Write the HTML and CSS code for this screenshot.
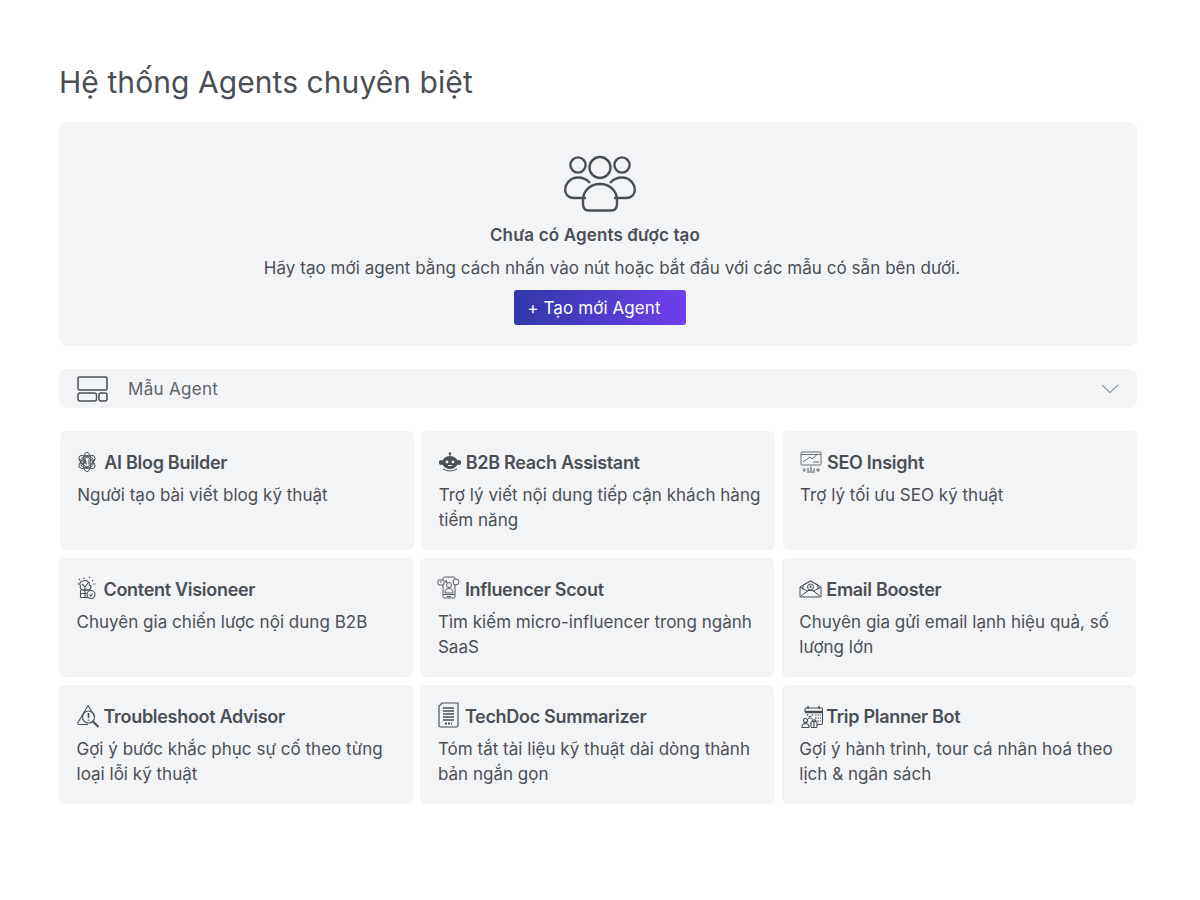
FILE: index.html
```html
<!DOCTYPE html>
<html lang="vi">
<head>
<meta charset="utf-8">
<title>Agents</title>
<link rel="stylesheet" href="styles.css">
</head>
<body>
<main class="page">
  <h1 class="title">Hệ thống Agents chuyên biệt</h1>
  <section class="hero">
    <svg class="hero-icon" width="72" height="57" viewBox="0 0 72 57" fill="none" stroke="#4b4f55" stroke-width="2.400">
      <circle cx="14" cy="10" r="7.600"/><circle cx="36" cy="12.500" r="10.500"/><circle cx="58" cy="10" r="7.600"/>
      <path d="M22 43H10C4 43 1.200 39 1.200 35C1.200 28 7 22.500 14 22.500C19 22.500 23 24.500 26 28"/>
      <path d="M50 43H62C68 43 70.800 39 70.800 35C70.800 28 65 22.500 58 22.500C53 22.500 49 24.500 46 28"/>
      <path d="M36 29C26 29 19 36 19 45V49C19 53 21 55.500 25 55.500H47C51 55.500 53 53 53 49V45C53 36 46 29 36 29Z"/>
    </svg>
    <h2 class="hero-title">Chưa có Agents được tạo</h2>
    <p class="hero-text">Hãy tạo mới agent bằng cách nhấn vào nút hoặc bắt đầu với các mẫu có sẵn bên dưới.</p>
    <button class="btn">+ Tạo mới Agent</button>
  </section>
  <div class="accordion">
    <svg class="acc-icon" width="31" height="26" viewBox="0 0 31 26" fill="none" stroke="#4b4f55" stroke-width="1.500">
      <rect x="1" y="1" width="29" height="13" rx="1.500"/><rect x="1" y="17" width="18.500" height="8" rx="2"/><rect x="22" y="17" width="8" height="8" rx="2"/>
    </svg>
    <span class="acc-label">Mẫu Agent</span>
    <svg class="chev" width="18" height="10" viewBox="0 0 18 10" fill="none" stroke="#9ca3af" stroke-width="1.300"><path d="M1 1L9 8.500L17 1"/></svg>
  </div>
  <div class="rows">
    <div class="row row-first">
      <article class="card">
        <h3 class="card-title">
          <span class="ic-box">
          <svg width="20" height="22" viewBox="0 0 20 22" fill="none" stroke="#4b4f55" stroke-width="1">
            <circle cx="10" cy="11" r="6.500"/><ellipse cx="10" cy="11" rx="9.300" ry="4.500" transform="rotate(35 10 11)"/><ellipse cx="10" cy="11" rx="9.300" ry="4.500" transform="rotate(-35 10 11)"/><ellipse cx="10" cy="11" rx="3.800" ry="9.800"/>
            <path d="M6.500 13.500L8 8.500L9.500 13.500M7 12H9M12 8.500V13.500" stroke-width="1.100"/>
          </svg></span>AI Blog Builder</h3>
        <p class="card-text">Người tạo bài viết blog kỹ thuật</p>
      </article>
      <article class="card">
        <h3 class="card-title">
          <span class="ic-box">
          <svg width="22" height="20" viewBox="0 0 22 20">
            <circle cx="11" cy="1.500" r="1.300" fill="#4b4f55"/><path d="M11 2V4M4 17Q11 21 18 17" stroke="#4b4f55" fill="none"/>
            <rect x="0" y="8" width="4" height="5" rx="2" fill="#4b4f55"/><rect x="18" y="8" width="4" height="5" rx="2" fill="#4b4f55"/>
            <ellipse cx="11" cy="10.500" rx="8" ry="6.500" fill="#4b4f55"/><circle cx="8" cy="10" r="1.400" fill="#f3f4f6"/><circle cx="14" cy="10" r="1.400" fill="#f3f4f6"/><path d="M9 13.500H13" stroke="#f3f4f6"/>
          </svg></span>B2B Reach Assistant</h3>
        <p class="card-text">Trợ lý viết nội dung tiếp cận khách hàng tiềm năng</p>
      </article>
      <article class="card">
        <h3 class="card-title">
          <span class="ic-box">
          <svg width="22" height="22" viewBox="0 0 22 22" fill="none" stroke="#6b7075" stroke-width="1">
            <rect x="1" y="1" width="20" height="13" rx="1"/><path d="M1 3.500H21M3 11L10 6L12 8L17 3.500M13 11H19M3 19H6M16 19H20M4 17V21M18 17V21"/><path d="M8 20V17M11 20V15.500M14 20V17.500M7 21H15" stroke="#4b4f55"/>
          </svg></span>SEO Insight</h3>
        <p class="card-text">Trợ lý tối ưu SEO kỹ thuật</p>
      </article>
    </div>
    <div class="row">
      <article class="card">
        <h3 class="card-title">
          <span class="ic-box ic-up">
          <svg width="20" height="24" viewBox="0 0 20 24" fill="none" stroke="#4b4f55" stroke-width="1.100">
            <path d="M7 3V1M3 4L1.500 2.500M12 2L13 .5M15 5L17 4M2 8H0M16 8H19" stroke-dasharray="1.500 1"/>
            <path d="M6 5C3 5 2 8 3.500 10C2.500 12 4 14 6 14H11C14 14 15 10 12.500 9C13 6 9 3.500 6 5Z"/><path d="M5 8L8 11L11 7M8 11V14"/>
            <rect x="3.500" y="14" width="9" height="7.500" rx="1"/><path d="M3.500 17.500H12.500M8 14V21.500"/>
            <circle cx="14" cy="18.500" r="4" fill="#f3f4f6"/><path d="M12.500 18.500L13.700 20L15.500 17.500"/>
          </svg></span>Content Visioneer</h3>
        <p class="card-text">Chuyên gia chiến lược nội dung B2B</p>
      </article>
      <article class="card">
        <h3 class="card-title">
          <span class="ic-box ic-up ic-left">
          <svg width="23" height="24" viewBox="0 0 23 24" fill="none" stroke="#5a5e63" stroke-width="1">
            <rect x="6" y="1" width="12" height="21" rx="1.500"/><path d="M6 18.500H18M10 20.500H14"/>
            <circle cx="12" cy="9" r="2.500"/><path d="M8 17C8 13.500 9.500 12.500 12 12.500S16 13.500 16 17Z"/>
            <rect x="1" y="4" width="6" height="5" rx="1" fill="#f3f4f6"/><circle cx="19" cy="6" r="3" fill="#f3f4f6"/><path d="M3 6H5M8 5L10 7L9 4"/>
          </svg></span>Influencer Scout</h3>
        <p class="card-text">Tìm kiếm micro-influencer trong ngành SaaS</p>
      </article>
      <article class="card">
        <h3 class="card-title">
          <span class="ic-box">
          <svg width="23" height="18" viewBox="0 0 23 18" fill="none" stroke="#4b4f55" stroke-width="1">
            <path d="M1 7V16.500C1 17 1.500 17 2 17H21C21.500 17 22 17 22 16.500V7L11.500 1Z"/><path d="M4 9.500V5L11.500 1L19 5V9.500"/><path d="M1.500 16.500L9 10.500H14L21.500 16.500M1 7L9 11.500M22 7L14 11.500"/>
            <circle cx="11.500" cy="7" r="3"/><path d="M11.500 5.500V8" stroke-width="1.500"/>
          </svg></span>Email Booster</h3>
        <p class="card-text">Chuyên gia gửi email lạnh hiệu quả, số lượng lớn</p>
      </article>
    </div>
    <div class="row">
      <article class="card">
        <h3 class="card-title">
          <span class="ic-box">
          <svg width="23" height="24" viewBox="0 0 23 24" fill="none" stroke="#4b4f55" stroke-width="1.100">
            <path d="M11 1.500L1 18.500C.5 19.500 1 20.500 2 20.500H11"/><path d="M11 1.500L18 13"/>
            <circle cx="11.500" cy="13" r="6"/><path d="M11.500 9V14M11.500 15.500V16.800" stroke-width="1.600"/><path d="M16 17.500L21.500 23" stroke-width="2.200"/>
          </svg></span>Troubleshoot Advisor</h3>
        <p class="card-text">Gợi ý bước khắc phục sự cố theo từng loại lỗi kỹ thuật</p>
      </article>
      <article class="card">
        <h3 class="card-title">
          <span class="ic-box ic-up1">
          <svg width="21" height="26" viewBox="0 0 21 26" fill="none" stroke="#4b4f55" stroke-width="1.200">
            <path d="M4 1H20V23.500C20 24.500 19 25 18 25H3C2 25 1 24.500 1 23.500V4Z"/><path d="M5 6H16M5 9H16M5 12H16M5 15H16M5 18H16" stroke-width="1.300"/><path d="M7 21.500H14" stroke-width="2" stroke-dasharray="2 1"/>
          </svg></span>TechDoc Summarizer</h3>
        <p class="card-text">Tóm tắt tài liệu kỹ thuật dài dòng thành bản ngắn gọn</p>
      </article>
      <article class="card">
        <h3 class="card-title">
          <span class="ic-box ic-right">
          <svg width="22" height="23" viewBox="0 0 22 23" fill="none" stroke="#4b4f55" stroke-width="1.100">
            <path d="M4 7V4.500C4 3.500 4.500 3 5.500 3H20C21 3 21.500 3.500 21.500 4.500V18C21.500 19 21 19.500 20 19.500H16"/><path d="M4 7H21.500" stroke-width="2.500"/><path d="M7 1V4M18 1V4" stroke-width="1.500"/>
            <path d="M6 9.500L12 15M12 9.500L6 15M14 10H20M14 13H20M14 16H20" stroke-dasharray="1.500 1"/>
            <circle cx="4.500" cy="15.500" r="2"/><path d="M1 22.500C1 20 2.500 18.500 4.500 18.500S8 20 8 22.500Z"/>
            <rect x="10" y="16.500" width="6" height="6" rx="1" fill="#f3f4f6"/><path d="M13 16.500V22.500M11.500 16.500V15H14.500V16.500"/>
          </svg></span>Trip Planner Bot</h3>
        <p class="card-text">Gợi ý hành trình, tour cá nhân hoá theo lịch &amp; ngân sách</p>
      </article>
    </div>
  </div>
</main>
</body>
</html>
```

FILE: styles.css
```css
* { box-sizing: border-box; }
html, body { margin: 0; padding: 0; background: #fff; }
body { font-family: Inter, "Noto Sans", "Liberation Sans", sans-serif; color: #4b4f55; }
.page { width: 1200px; padding: 62px 63px 0 59px; }
.title { margin: 0; font-size: 30px; line-height: 40px; font-weight: 400; letter-spacing: 0.07px; color: #4b4f55; }
.hero {
  margin-top: 20px; height: 224px; background: #f3f4f6; border-radius: 8px;
  display: flex; flex-direction: column; align-items: center; padding-top: 33px;
}
.hero-icon { display: block; margin-left: 4px; }
.hero-title { margin: 11px 6px 0 0; font-size: 17px; line-height: 24px; font-weight: 600; letter-spacing: 0.15px; }
.hero-text { margin: 9px 0 0 28px; font-size: 17px; line-height: 25px; letter-spacing: 0.045px; }
.btn {
  margin: 9px 0 0 4px; width: 172px; height: 35px; padding: 0 12px 0 0; border: 0; border-radius: 3px;
  background: linear-gradient(90deg, #3038a8, #6f3fec); color: #fff;
  font: 400 17px Inter, sans-serif; letter-spacing: 0.1px; display: block;
}
.accordion {
  margin-top: 23px; height: 39px; background: #f3f4f6; border-radius: 8px;
  display: flex; align-items: center; padding: 0 18px;
}
.acc-label { margin-left: 20px; font-size: 17px; letter-spacing: 0.3px; color: #5f6368; flex: 1; }
.rows { margin-top: 23px; display: flex; flex-direction: column; gap: 8px; }
.row { display: grid; grid-template-columns: repeat(3, 354px); gap: 7.400px; }
.row-first { margin-left: 0.8px; }
.card { height: 119px; background: #f3f4f6; border-radius: 6px; padding: 18px 12px 0 17.500px; }
.card-title { margin: 0; display: flex; align-items: center; height: 26px; font-size: 18px; font-weight: 600; letter-spacing: -0.3px; color: #4b4f55; }
.ic-box { flex: none; width: 27px; display: flex; align-items: center; }
.ic-up { margin-top: -3px; }
.ic-up1 { margin-top: -2px; }
.ic-left svg { margin-left: -1px; }
.ic-right svg { margin-left: 1.500px; }
.card-text { margin: 8px 0 0; font-size: 17px; line-height: 25px; letter-spacing: 0.02px; color: #4b4f55; }
```
